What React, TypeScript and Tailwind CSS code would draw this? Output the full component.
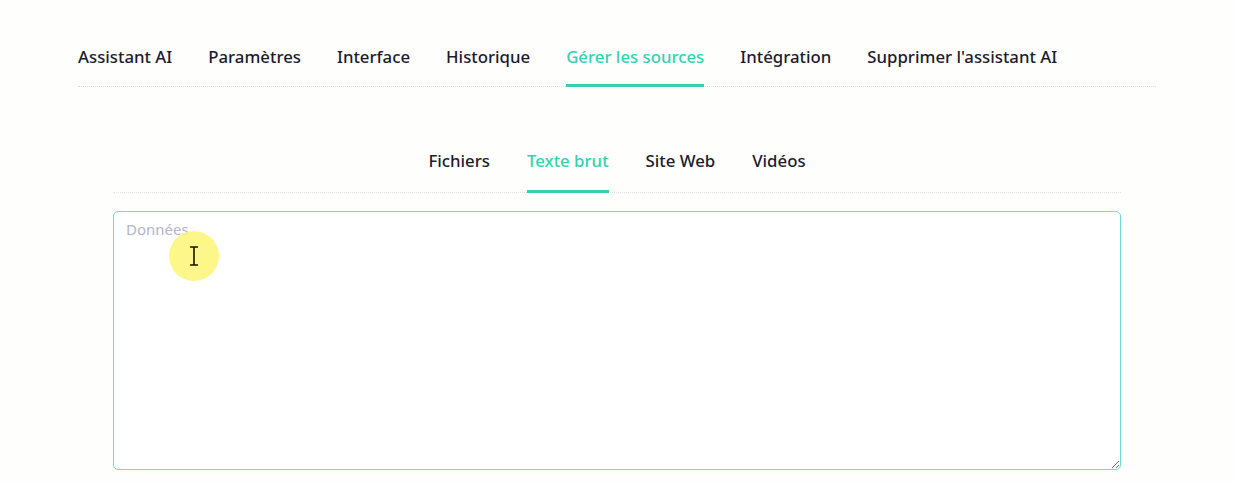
const mainTabs = [
  "Assistant AI",
  "Paramètres",
  "Interface",
  "Historique",
  "Gérer les sources",
  "Intégration",
  "Supprimer l'assistant AI",
];

const subTabs = ["Fichiers", "Texte brut", "Site Web", "Vidéos"];

export default function App() {
  return (
    <div
      className="min-h-screen w-full bg-[#fefefc] text-[#1d1b2c]"
      style={{ fontFamily: '"Noto Sans", "Open Sans", sans-serif' }}
    >
      <div className="px-[78px] pt-[38px]">
        {/* main tabs */}
        <div className="flex gap-[36px] border-b border-dotted border-[#d8d8e6]">
          {mainTabs.map((t) => {
            const active = t === "Gérer les sources";
            return (
              <div
                key={t}
                className={
                  active
                    ? "pb-[15px] pt-[6px] text-[16.8px] font-medium text-[#33d1b3] border-b-[3px] border-[#33d1b3] -mb-px"
                    : "pb-[15px] pt-[6px] text-[16.8px] font-medium border-b-[3px] border-transparent -mb-px"
                }
              >
                {t}
              </div>
            );
          })}
        </div>

        {/* sub section */}
        <div className="px-[35px] pt-[61px]">
          <div className="flex justify-center gap-[37px] border-b border-dotted border-[#e2e2ea]">
            {subTabs.map((t) => {
              const active = t === "Texte brut";
              return (
                <div
                  key={t}
                  className={
                    active
                      ? "pb-[17px] text-[16.8px] font-medium text-[#33d1b3] border-b-[3px] border-[#33d1b3] -mb-px"
                      : "pb-[17px] text-[16.8px] font-medium border-b-[3px] border-transparent -mb-px"
                  }
                >
                  {t}
                </div>
              );
            })}
          </div>

          <div className="relative mt-[18px]">
            <textarea
              placeholder="Données"
              className="block h-[259px] w-full resize-y rounded-[5px] border border-[#6fdad6] bg-white px-[12px] py-[6px] text-[15px] outline-none placeholder:text-[#b4b4c4]"
            />
            {/* cursor highlight from the recording */}
            <div className="pointer-events-none absolute left-[56px] top-[20px] flex h-[50px] w-[50px] items-center justify-center rounded-full bg-[#fbf56a]/80">
              <svg width="10" height="20" viewBox="0 0 10 20">
                <path
                  d="M1 1h8M5 1v18M1 19h8"
                  stroke="#111"
                  strokeWidth="1.6"
                  fill="none"
                />
              </svg>
            </div>
          </div>
        </div>
      </div>
    </div>
  );
}
